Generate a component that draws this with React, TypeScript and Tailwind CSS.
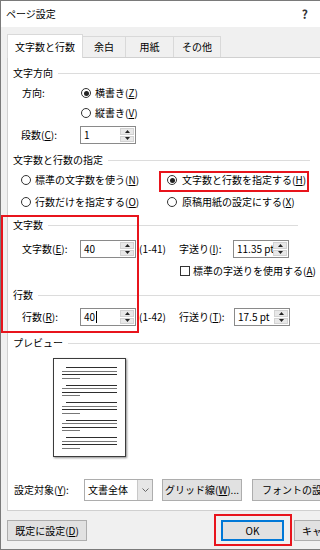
import type { ReactNode } from "react";

function Mn({ k }: { k: string }) {
  return (
    <>
      (<u>{k}</u>)
    </>
  );
}

function Section({ title, lineEnd = "w-auto flex-1" }: { title: string; lineEnd?: string }) {
  return (
    <div className="flex h-[20px] items-center">
      <span className="whitespace-nowrap">{title}</span>
      <div className={`ml-[5px] h-px bg-[#dcdcdc] ${lineEnd}`} />
    </div>
  );
}

function Radio({ checked = false }: { checked?: boolean }) {
  return (
    <span className="flex h-[10px] w-[10px] shrink-0 items-center justify-center rounded-full border border-[#333] bg-white">
      {checked && <span className="h-[5px] w-[5px] rounded-full bg-[#222]" />}
    </span>
  );
}

function Spinner() {
  return (
    <div className="flex w-[15px] shrink-0 flex-col gap-px py-px pr-px">
      <div className="flex flex-1 items-center justify-center border border-[#d2d2d2] bg-[#e8e8e8]">
        <svg width="5" height="3" viewBox="0 0 5 3">
          <path d="M2.5 0 L5 3 L0 3 Z" fill="#222" />
        </svg>
      </div>
      <div className="flex flex-1 items-center justify-center border border-[#d2d2d2] bg-[#e8e8e8]">
        <svg width="5" height="3" viewBox="0 0 5 3">
          <path d="M0 0 L5 0 L2.5 3 Z" fill="#222" />
        </svg>
      </div>
    </div>
  );
}

function NumBox({ value, cursor = false }: { value: string; cursor?: boolean }) {
  return (
    <div className="flex h-[18px] w-[56px] shrink-0 border border-[#8a8a8a] bg-white">
      <div className="flex min-w-0 flex-1 items-center overflow-hidden whitespace-nowrap pl-[3px]">
        {value}
        {cursor && <span className="ml-px h-[12px] w-px bg-black" />}
      </div>
      <Spinner />
    </div>
  );
}

function Btn({ children, className = "" }: { children: ReactNode; className?: string }) {
  return (
    <div
      className={`flex shrink-0 items-center whitespace-nowrap border border-[#adadad] bg-[#e1e1e1] ${className}`}
    >
      {children}
    </div>
  );
}

function PreviewGroup() {
  return (
    <div className="flex flex-col gap-[2.5px]">
      <div className="ml-[4px] h-px bg-[#2e2e2e]" />
      <div className="h-px bg-[#777]" />
      <div className="h-px bg-[#2e2e2e]" />
      <div className="h-px w-[18px] bg-[#777]" />
    </div>
  );
}

export default function App() {
  return (
    <div className="relative h-[550px] w-[320px] overflow-hidden border-y border-l border-[#7a7a7a] bg-[#f0f0f0] font-['Noto_Sans_CJK_JP',sans-serif] text-[10px] leading-none text-black">
      {/* title bar */}
      <div className="flex h-[26px] items-center justify-between bg-white pl-[5px] pr-[12px]">
        <span>ページ設定</span>
        <span className="text-[12px] font-bold text-[#333]">?</span>
      </div>

      {/* tabs */}
      <div className="flex h-[30px] items-end pl-[6px]">
        <div className="relative z-10 -mb-px flex h-[24px] w-[76px] items-center justify-center border border-b-0 border-[#d9d9d9] bg-white">
          文字数と行数
        </div>
        <div className="flex h-[21px] w-[43px] items-center justify-center border border-l-0 border-b-0 border-[#d9d9d9]">
          余白
        </div>
        <div className="flex h-[21px] w-[48px] items-center justify-center border border-l-0 border-b-0 border-[#d9d9d9]">
          用紙
        </div>
        <div className="flex h-[21px] w-[47px] items-center justify-center border border-l-0 border-b-0 border-[#d9d9d9]">
          その他
        </div>
      </div>

      {/* panel */}
      <div className="ml-[6px] h-[454px] w-[330px] border border-[#d0d0d0] bg-white pl-[5px] pt-[5px]">
        <Section title="文字方向" />
        <div className="flex h-[20px] items-center pl-[9px]">
          <span className="w-[59px]">方向:</span>
          <Radio checked />
          <span className="ml-[4px]">
            横書き<Mn k="Z" />
          </span>
        </div>
        <div className="flex h-[20px] items-center pl-[68px]">
          <Radio />
          <span className="ml-[4px]">
            縦書き<Mn k="V" />
          </span>
        </div>
        <div className="mt-[2px] flex h-[20px] items-center pl-[8px]">
          <span className="w-[59px]">
            段数<Mn k="C" />:
          </span>
          <NumBox value="1" />
        </div>

        <div className="mt-[5px]">
          <Section title="文字数と行数の指定" lineEnd="w-[202px]" />
        </div>
        <div className="flex h-[20px] items-center pl-[8px]">
          <div className="flex w-[146px] shrink-0 items-center">
            <Radio />
            <span className="ml-[4px] whitespace-nowrap">
              標準の文字数を使う<Mn k="N" />
            </span>
          </div>
          <Radio checked />
          <span className="ml-[5px] whitespace-nowrap">
            文字数と行数を指定する<Mn k="H" />
          </span>
        </div>
        <div className="mt-[2px] flex h-[20px] items-center pl-[8px]">
          <div className="flex w-[146px] shrink-0 items-center">
            <Radio />
            <span className="ml-[4px] whitespace-nowrap">
              行数だけを指定する<Mn k="O" />
            </span>
          </div>
          <Radio />
          <span className="ml-[5px] whitespace-nowrap">
            原稿用紙の設定にする<Mn k="X" />
          </span>
        </div>

        <div className="mt-[3px]">
          <Section title="文字数" lineEnd="w-[250px]" />
        </div>
        <div className="mt-[4px] flex h-[20px] items-center pl-[9px]">
          <span className="w-[58px] shrink-0 whitespace-nowrap">
            文字数<Mn k="E" />:
          </span>
          <NumBox value="40" />
          <span className="ml-[3px] w-[40px] shrink-0">(1-41)</span>
          <span className="w-[54px] shrink-0 whitespace-nowrap">
            字送り<Mn k="I" />:
          </span>
          <NumBox value="11.35 pt" />
        </div>
        <div className="mt-[2px] flex h-[20px] items-center pl-[167px]">
          <span className="h-[10px] w-[10px] shrink-0 border border-[#333] bg-white" />
          <span className="ml-[3px] whitespace-nowrap">
            標準の字送りを使用する<Mn k="A" />
          </span>
        </div>

        <div className="mt-[4px]">
          <Section title="行数" />
        </div>
        <div className="mt-[2px] flex h-[20px] items-center pl-[9px]">
          <span className="w-[58px] shrink-0 whitespace-nowrap">
            行数<Mn k="R" />:
          </span>
          <NumBox value="40" cursor />
          <span className="ml-[3px] w-[40px] shrink-0">(1-42)</span>
          <span className="w-[55px] shrink-0 whitespace-nowrap">
            行送り<Mn k="T" />:
          </span>
          <NumBox value="17.5 pt" />
        </div>

        <div className="mt-[6px]">
          <Section title="プレビュー" />
        </div>
        <div className="ml-[40px] mt-[5px] flex h-[99px] w-[73px] flex-col gap-[6px] border border-[#3c3c3c] bg-white px-[8px] pt-[8px] shadow-[1px_1px_2px_rgba(0,0,0,0.45)]">
          <PreviewGroup />
          <PreviewGroup />
          <PreviewGroup />
          <PreviewGroup />
          <PreviewGroup />
        </div>

        <div className="mt-[22px] flex h-[22px] items-center pl-[1px]">
          <span className="w-[70px] shrink-0 whitespace-nowrap">
            設定対象<Mn k="Y" />:
          </span>
          <div className="flex h-[22px] w-[69px] shrink-0 border border-[#adadad] bg-white">
            <div className="flex flex-1 items-center pl-[3px]">文書全体</div>
            <div className="flex w-[15px] items-center justify-center border-l border-[#c8c8c8] bg-[#e6e6e6]">
              <svg width="7" height="4" viewBox="0 0 7 4">
                <path d="M0.5 0.5 L3.5 3.5 L6.5 0.5" fill="none" stroke="#666" strokeWidth="1" />
              </svg>
            </div>
          </div>
          <Btn className="ml-[9px] h-[22px] w-[80px] justify-center">
            グリッド線<Mn k="W" />...
          </Btn>
          <Btn className="ml-[10px] h-[22px] w-[90px] pl-[9px]">フォントの設定(F)...</Btn>
        </div>
      </div>

      {/* footer */}
      <div className="mt-[9px] flex pl-[6px]">
        <Btn className="h-[21px] w-[80px] justify-center">
          既定に設定<Mn k="D" />
        </Btn>
        <div className="ml-[134px] flex h-[21px] w-[63px] shrink-0 items-center justify-center border-2 border-[#0078d7] bg-[#e1e1e1]">
          OK
        </div>
        <Btn className="ml-[10px] h-[21px] w-[80px] pl-[7px]">キャンセル</Btn>
      </div>

      {/* red annotation frames */}
      <div className="absolute left-[158px] top-[170px] h-[21px] w-[150px] border-[2.5px] border-[#e8141c]" />
      <div className="absolute left-0 top-[214px] h-[118px] w-[138px] border-[2.5px] border-[#e8141c]" />
      <div className="absolute left-[213px] top-[513px] h-[32px] w-[78px] border-[2.5px] border-[#e8141c]" />
    </div>
  );
}
